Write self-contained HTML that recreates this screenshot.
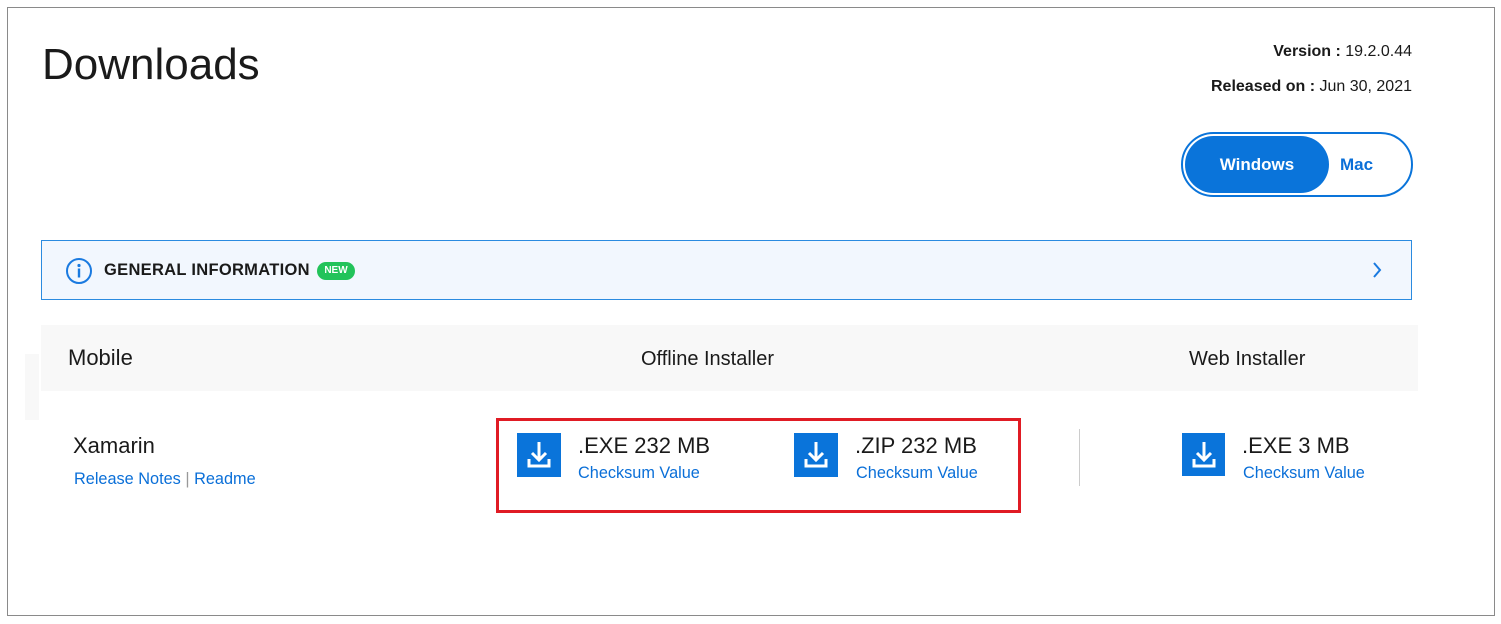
<!DOCTYPE html>
<html><head><meta charset="utf-8"><style>
body{margin:0;width:1501px;height:624px;background:#fff;font-family:"Liberation Sans",sans-serif;position:relative;overflow:hidden;color:#1a1a1a}
.a{position:absolute;white-space:nowrap}
.lnk{color:#0a6fd8}
.ic{position:absolute;width:44px;height:44px;background:#0a74da}
</style></head><body>
<div class="a" style="left:7px;top:7px;width:1486px;height:607px;border:1px solid #8a8a8a"></div>
<div class="a" style="left:42px;top:40px;font-size:44px;color:#1a1a1a">Downloads</div>
<div class="a" style="right:89px;top:43px;font-size:16px"><b>Version :</b> 19.2.0.44</div>
<div class="a" style="right:89px;top:78px;font-size:16px"><b>Released on :</b> Jun 30, 2021</div>
<div class="a" style="left:1181px;top:132px;width:228px;height:61px;border:2px solid #0a74da;border-radius:33px"></div>
<div class="a" style="left:1185px;top:136px;width:144px;height:57px;background:#0a74da;border-radius:29px;color:#fff;font-weight:bold;font-size:17px;line-height:57px;text-align:center">Windows</div>
<div class="a" style="left:1340px;top:155px;color:#0a6fd8;font-weight:bold;font-size:17px">Mac</div>
<div class="a" style="left:41px;top:240px;width:1369px;height:58px;border:1px solid #2b8be0;background:#f2f7fe"></div>
<svg class="a" style="left:65px;top:257px" width="28" height="28" viewBox="0 0 28 28"><circle cx="14" cy="14" r="12" fill="none" stroke="#1a7ae0" stroke-width="2"/><circle cx="14" cy="8.5" r="1.6" fill="#1a7ae0"/><rect x="12.8" y="11.5" width="2.4" height="9" fill="#1a7ae0"/></svg>
<div class="a" style="left:104px;top:261px;font-size:16.5px;font-weight:bold;letter-spacing:0.3px">GENERAL INFORMATION</div>
<div class="a" style="left:317px;top:262px;width:38px;height:18px;border-radius:9px;background:#22c35a;color:#fff;font-size:10px;font-weight:bold;line-height:18px;text-align:center">NEW</div>
<svg class="a" style="left:1371px;top:261px" width="12" height="18"><path d="M3 2l6 7-6 7" fill="none" stroke="#1a7ae0" stroke-width="2"/></svg>
<div class="a" style="left:41px;top:325px;width:1377px;height:66px;background:#f8f8f8"></div>
<div class="a" style="left:25px;top:354px;width:14px;height:66px;background:#f8f8f8"></div>
<div class="a" style="left:68px;top:345px;font-size:22px">Mobile</div>
<div class="a" style="left:641px;top:348px;font-size:20px">Offline Installer</div>
<div class="a" style="left:1189px;top:348px;font-size:20px">Web Installer</div>
<div class="a" style="left:73px;top:433px;font-size:22px">Xamarin</div>
<div class="a" style="left:74px;top:470px;font-size:16.3px"><span class="lnk">Release Notes</span> <span style="color:#999">|</span> <span class="lnk">Readme</span></div>
<div class="a" style="left:496px;top:418px;width:519px;height:89px;border:3px solid #e01b24"></div>
<div class="a" style="left:1079px;top:429px;width:1px;height:57px;background:#ccc"></div>
<div class="ic" style="left:517px;top:433px"><svg width="44" height="44"><path d="M22 9v17M15 20l7 7 7-7M12 26v7h20v-7" fill="none" stroke="#fff" stroke-width="3"/></svg></div>
<div class="ic" style="left:794px;top:433px"><svg width="44" height="44"><path d="M22 9v17M15 20l7 7 7-7M12 26v7h20v-7" fill="none" stroke="#fff" stroke-width="3"/></svg></div>
<div class="ic" style="left:1182px;top:433px;width:43px;height:43px"><svg width="44" height="44"><path d="M22 9v17M15 20l7 7 7-7M12 26v7h20v-7" fill="none" stroke="#fff" stroke-width="3"/></svg></div>
<div class="a" style="left:578px;top:433px;font-size:22px">.EXE 232 MB</div>
<div class="a lnk" style="left:578px;top:464px;font-size:16.3px">Checksum Value</div>
<div class="a" style="left:855px;top:433px;font-size:22px">.ZIP 232 MB</div>
<div class="a lnk" style="left:856px;top:464px;font-size:16.3px">Checksum Value</div>
<div class="a" style="left:1242px;top:433px;font-size:22px">.EXE 3 MB</div>
<div class="a lnk" style="left:1243px;top:464px;font-size:16.3px">Checksum Value</div>
</body></html>
